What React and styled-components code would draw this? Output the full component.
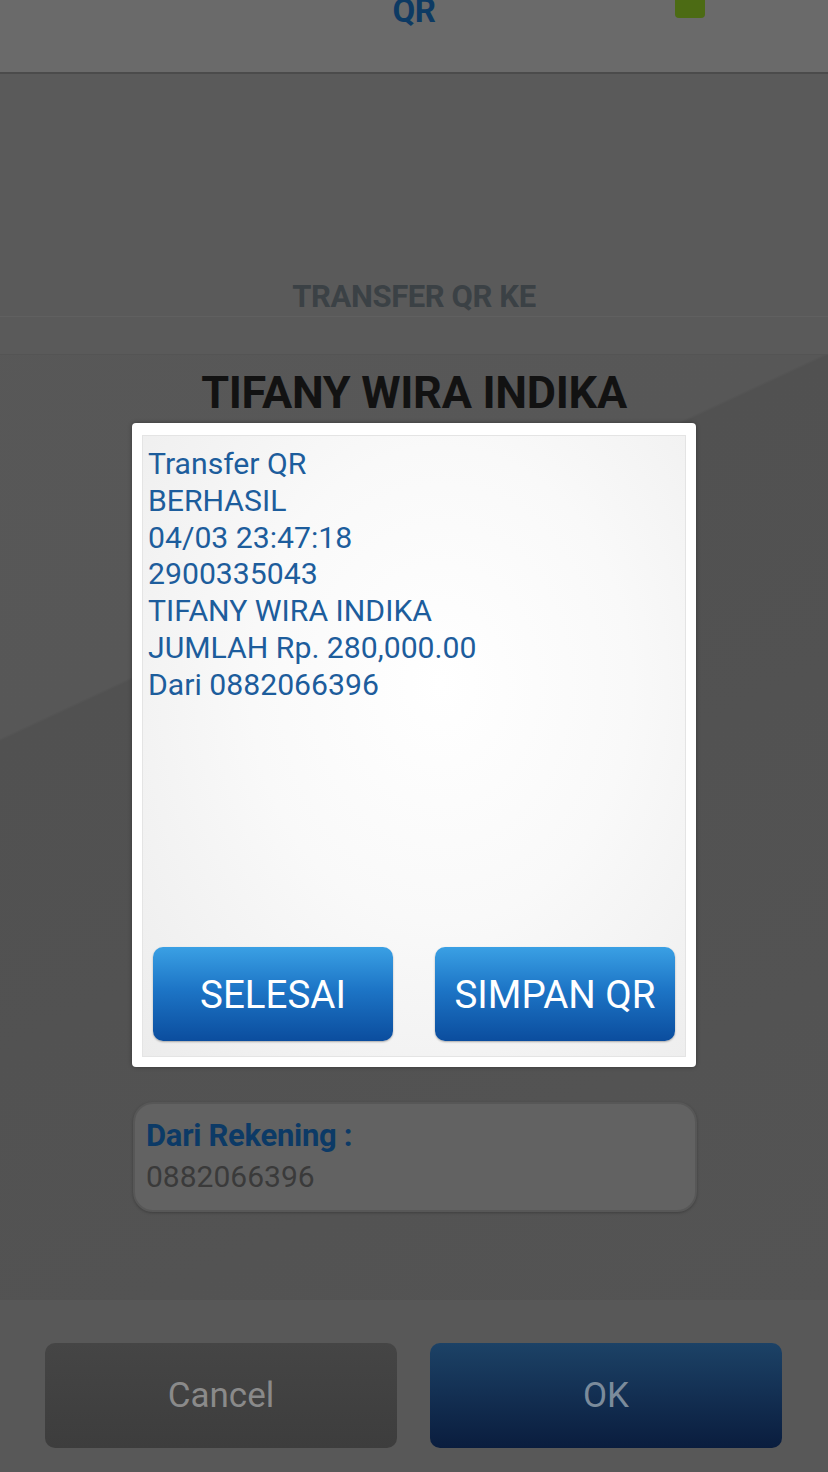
import React from "react";
import styled, { createGlobalStyle } from "styled-components";

const Global = createGlobalStyle`
  html, body { margin: 0; padding: 0; }
  body { font-family: Roboto, "Noto Sans", "Liberation Sans", sans-serif; background: #5a5a5a; }
  * { box-sizing: border-box; }
`;

const Page = styled.div`
  width: 828px;
  height: 1472px;
  overflow: hidden;
  display: flex;
  flex-direction: column;
  background: #585858;
`;

const Header = styled.header`
  height: 74px;
  flex: none;
  background: #6a6a6a;
  border-bottom: 2px solid #4b4b4b;
  display: grid;
  grid-template-columns: 1fr auto 1fr;
  align-items: start;
`;

const HeaderTitle = styled.div`
  grid-column: 2;
  margin-top: -6px;
  font-size: 33px;
  line-height: 33px;
  font-weight: 700;
  color: #0d3a63;
  letter-spacing: -0.5px;
`;

const StatusSquare = styled.div`
  grid-column: 3;
  justify-self: start;
  margin-left: 240px;
  margin-top: -12px;
  width: 30px;
  height: 30px;
  border-radius: 4px;
  background: #4c6b14;
`;

const Body = styled.main`
  flex: none;
  height: 1226px;
  display: flex;
  flex-direction: column;
  align-items: center;
  background: linear-gradient(155deg, #585858 0%, #575757 41.2%, #515151 41.4%, #545454 100%);
`;

const HeadingBand = styled.section`
  align-self: stretch;
  height: 281px;
  padding-top: 205px;
  display: flex;
  flex-direction: column;
  align-items: center;
  border-bottom: 1px solid rgba(0, 0, 0, 0.06);
  background: #5a5a5a;
`;

const SubTitle = styled.div`
  font-size: 31px;
  line-height: 36px;
  font-weight: 700;
  color: #3b4145;
  letter-spacing: -0.4px;
  padding-bottom: 1px;
  width: 100%;
  text-align: center;
  border-bottom: 1px solid rgba(255, 255, 255, 0.04);
`;

const Name = styled.h1`
  margin: 13px 0 0;
  font-size: 45px;
  line-height: 50px;
  font-weight: 700;
  color: #121212;
  letter-spacing: -0.3px;
`;

const DialogFrame = styled.div`
  margin-top: 5px;
  width: 564px;
  height: 644px;
  background: #ffffff;
  border-radius: 4px;
  padding: 12px 10px 10px 10px;
  box-shadow: 0 0 4px rgba(0, 0, 0, 0.35);
`;

const DialogInner = styled.div`
  height: 100%;
  display: flex;
  flex-direction: column;
  background: radial-gradient(ellipse at 55% 40%, #ffffff 0%, #f9f9f9 45%, #ececec 100%);
  border: 1px solid #e4e4e4;
  padding: 10px 10px 15px 5px;
`;

const Message = styled.div`
  flex: 1;
  font-size: 30.2px;
  line-height: 36.8px;
  color: #1d5d9c;
`;

const Line = styled.div``;

const DialogActions = styled.div`
  display: flex;
  gap: 42px;
  padding-left: 5px;
`;

const BlueButton = styled.button`
  flex: 1;
  height: 94px;
  border: none;
  border-radius: 10px;
  background: linear-gradient(180deg, #3aa0e4 0%, #1d75c6 45%, #0b4d9e 100%);
  box-shadow: 0 1px 2px rgba(0, 0, 0, 0.3);
  color: #ffffff;
  font-family: inherit;
  font-size: 38.5px;
  padding-top: 2px;
`;

const AccountBox = styled.div`
  margin-top: 35px;
  width: 564px;
  height: 110px;
  margin-left: 2px;
  border-radius: 20px;
  background: #626262;
  border: 2px solid #575757;
  box-shadow: 0 1px 3px rgba(0, 0, 0, 0.25);
  padding: 13px 11px;
  display: flex;
  flex-direction: column;
`;

const AccountLabel = styled.div`
  font-size: 31px;
  line-height: 38px;
  font-weight: 700;
  color: #0c3a66;
  letter-spacing: -0.3px;
`;

const AccountValue = styled.div`
  font-size: 30px;
  line-height: 44px;
  color: #3a3a3a;
`;

const Footer = styled.footer`
  flex: 1;
  background: #585858;
  display: flex;
  gap: 33px;
  padding: 43px 46px 0 45px;
`;

const FooterButton = styled.button`
  flex: 1;
  height: 105px;
  border: none;
  border-radius: 10px;
  font-family: inherit;
  font-size: 35px;
  background: ${(p) =>
    p.$primary
      ? "linear-gradient(180deg, #1c4266 0%, #132f52 50%, #0a1d3e 100%)"
      : "linear-gradient(180deg, #454545 0%, #3d3d3d 100%)"};
  color: ${(p) => (p.$primary ? "#7b8b9b" : "#8a8a8a")};
`;

const lines = [
  "Transfer QR",
  "BERHASIL",
  "04/03 23:47:18",
  "2900335043",
  "TIFANY WIRA INDIKA",
  "JUMLAH Rp. 280,000.00",
  "Dari 0882066396",
];

export default function App() {
  return (
    <>
      <Global />
      <Page>
        <Header>
          <HeaderTitle>QR</HeaderTitle>
          <StatusSquare />
        </Header>
        <Body>
          <HeadingBand>
            <SubTitle>TRANSFER QR KE</SubTitle>
          </HeadingBand>
          <Name>TIFANY WIRA INDIKA</Name>
          <DialogFrame>
            <DialogInner>
              <Message>
                {lines.map((l) => (
                  <Line key={l}>{l}</Line>
                ))}
              </Message>
              <DialogActions>
                <BlueButton>SELESAI</BlueButton>
                <BlueButton>SIMPAN QR</BlueButton>
              </DialogActions>
            </DialogInner>
          </DialogFrame>
          <AccountBox>
            <AccountLabel>Dari Rekening :</AccountLabel>
            <AccountValue>0882066396</AccountValue>
          </AccountBox>
        </Body>
        <Footer>
          <FooterButton>Cancel</FooterButton>
          <FooterButton $primary>OK</FooterButton>
        </Footer>
      </Page>
    </>
  );
}
